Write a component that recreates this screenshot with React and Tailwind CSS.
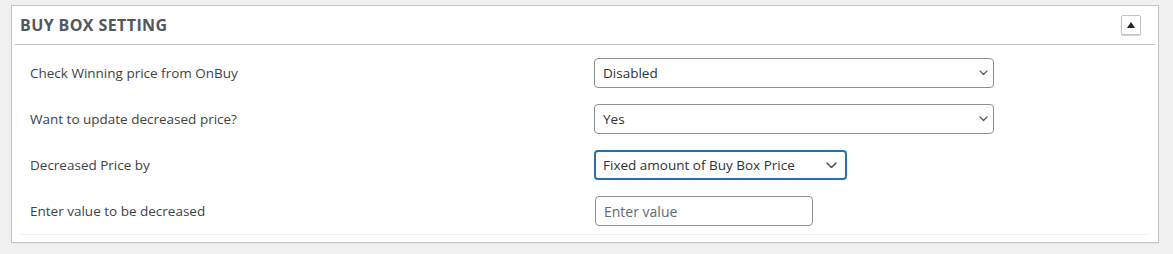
const font = { fontFamily: '"Open Sans", "Noto Sans", sans-serif' };

function Row({ label, children }) {
  return (
    <div className="flex items-center h-[46px] pl-[10px]">
      <div className="w-[564px] text-[13.5px] text-[#3c434a]">{label}</div>
      <div className="flex-1">{children}</div>
    </div>
  );
}

function Chevron({ w }) {
  return (
    <svg width={w} height={w * 0.6} viewBox="0 0 10 6" fill="none">
      <path d="M1 1 L5 5 L9 1" stroke="#50575e" strokeWidth="1.4" strokeLinecap="round" strokeLinejoin="round" />
    </svg>
  );
}

function Select({ value, width, focused }) {
  return (
    <div
      className={
        'flex items-center justify-between h-[30px] bg-white rounded text-[13.5px] text-[#2c3338] ' +
        (focused ? 'border-2 border-[#2271b1] pl-[7px] pr-[8px]' : 'border border-[#8c8f94] pl-2 pr-[5px]')
      }
      style={{ width }}
    >
      <span>{value}</span>
      <Chevron w={focused ? 11 : 9} />
    </div>
  );
}

export default function App() {
  return (
    <div className="w-[1173px] h-[254px] bg-[#f0f0f1] pt-[5px] pl-[11px]" style={font}>
      <div className="w-[1148px] h-[238px] bg-white border border-[#c3c4c7] shadow-[0_1px_1px_rgba(0,0,0,0.04)]">
        {/* Header */}
        <div className="flex items-center justify-between h-[39px] mx-[3px] border-b border-[#c3c4c7] pl-[5px] pr-[14px]">
          <h2 className="text-[16px] font-bold text-[#50575e] tracking-[0.4px]">BUY BOX SETTING</h2>
          <button className="w-5 h-5 flex items-center justify-center border border-[#c3c4c7] rounded-[2px] bg-white shadow-[0_1px_1px_rgba(0,0,0,0.2)]">
            <svg width="8" height="6" viewBox="0 0 8 6">
              <path d="M4 0 L8 6 L0 6 Z" fill="#1d2327" />
            </svg>
          </button>
        </div>

        {/* Settings rows */}
        <div className="mx-2 mt-[5px] border-b border-[#f0f0f1]">
          <Row label="Check Winning price from OnBuy">
            <Select value="Disabled" width={400} />
          </Row>
          <Row label="Want to update decreased price?">
            <Select value="Yes" width={400} />
          </Row>
          <Row label="Decreased Price by">
            <Select value="Fixed amount of Buy Box Price" width={253} focused />
          </Row>
          <Row label="Enter value to be decreased">
            <input
              placeholder="Enter value"
              className="ml-px w-[218px] h-[30px] border border-[#8c8f94] rounded px-2 text-[14px] text-[#2c3338] placeholder:text-[#646970] outline-none"
              style={font}
            />
          </Row>
        </div>
      </div>
    </div>
  );
}
